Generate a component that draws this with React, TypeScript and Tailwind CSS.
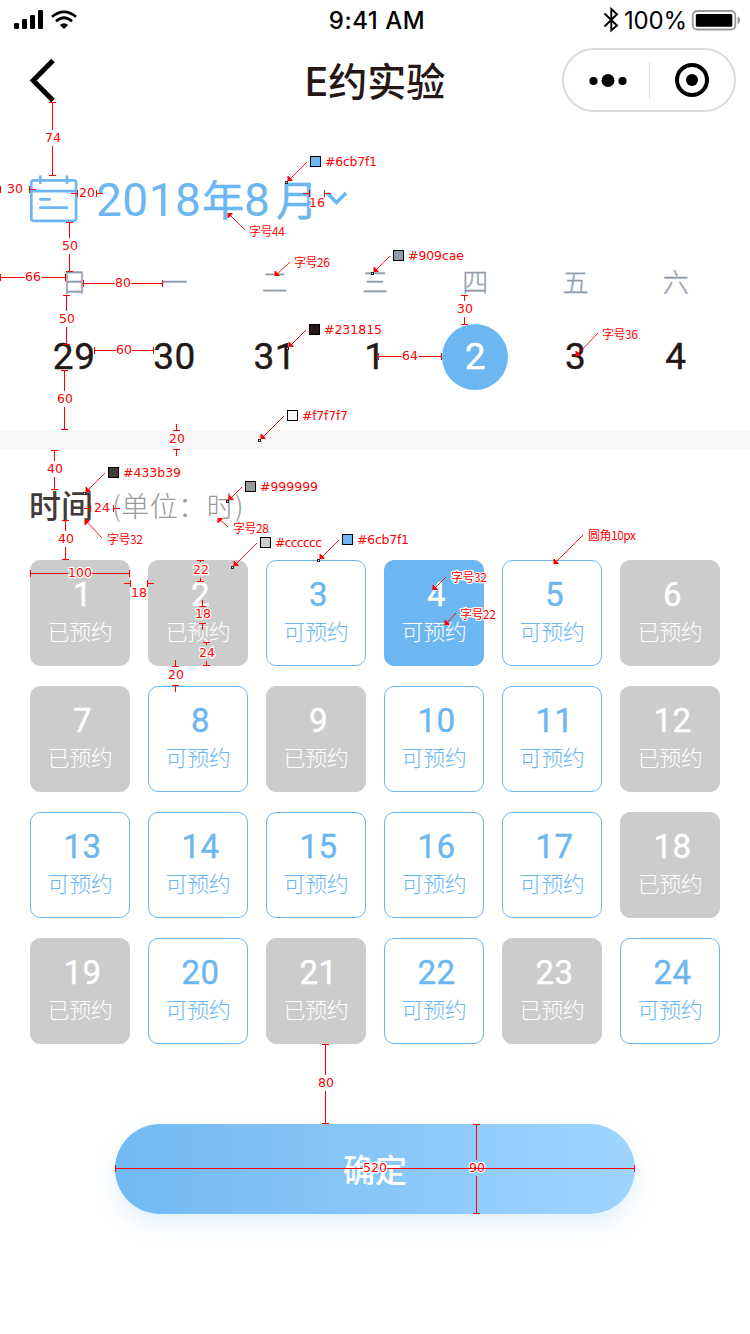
import React from "react";

const FONT = "font-['Inter','Noto_Sans_CJK_SC',sans-serif]";
const CJK = "font-['Noto_Sans_CJK_SC',sans-serif]";
const DIGITS = "font-['Roboto',sans-serif]";

const weekdays = ["日", "一", "二", "三", "四", "五", "六"];
const dates = [29, 30, 31, 1, 2, 3, 4];
const booked = new Set([1, 2, 6, 7, 9, 12, 18, 19, 21, 23]);
const selectedHour = 4;

function StatusBar() {
  return (
    <div className="flex h-10 items-center justify-between pr-[10px] pl-[14px]">
      <div className="flex w-[200px] items-center">
        <svg width="64" height="24" viewBox="0 0 64 24">
          <rect x="0" y="15" width="5" height="6" rx="1.2" />
          <rect x="8" y="11" width="5" height="10" rx="1.2" />
          <rect x="16" y="7" width="5" height="14" rx="1.2" />
          <rect x="24" y="2" width="5" height="19" rx="1.2" />
          <g fill="none" stroke="#000" strokeWidth="2.7">
            <path d="M38 8.8Q50 -1.2 62 8.8" />
            <path d="M42 13.3Q50 6.2 58 13.3" />
          </g>
          <path d="M45.8 17Q50 13.6 54.2 17L50 21Z" />
        </svg>
      </div>
      <div className="pt-[2px] text-[24px] leading-none font-medium tracking-[0.5px] text-black">9:41 AM</div>
      <div className="flex w-[200px] items-center justify-end">
        <svg width="18" height="28" viewBox="0 0 18 28" fill="none" stroke="#000" strokeWidth="1.9">
          <path d="M2.5 7.5L15 19.5L9.3 24.5V3L15 8.3L2.5 20.5" />
        </svg>
        <span className="ml-1 w-[67px] pt-[2px] text-[24px] leading-none tracking-[-0.2px] whitespace-nowrap text-black">100%</span>
        <svg className="-mr-[1px]" width="50" height="24" viewBox="0 0 50 24">
          <rect x="1.8" y="3" width="42.5" height="18.5" rx="4" fill="none" stroke="#9a9a9a" strokeWidth="1.8" />
          <rect x="4.8" y="6" width="36.5" height="12.8" rx="1.5" />
          <path d="M46.5 8.8C50 9.6 50 15 46.5 16Z" fill="#9a9a9a" />
        </svg>
      </div>
    </div>
  );
}

function NavBar() {
  return (
    <div className="flex h-[80px] items-center justify-between pr-[14px] pl-[28px]">
      <div className="w-[174px]">
        <svg width="28" height="44" viewBox="0 0 28 44" fill="none" stroke="#000" strokeWidth="5">
          <path d="M25 2.5L5.2 22.5L25 42.5" />
        </svg>
      </div>
      <h1 className={`${FONT} ml-[-14px] pt-[4px] text-[39px] leading-[76px] font-medium text-[#231815]`}>E约实验</h1>
      <div className="flex h-16 w-[174px] items-center rounded-full border-2 border-[#dcdcdc]">
        <div className="flex w-[85px] justify-center">
          <svg width="40" height="20" viewBox="0 0 40 20">
            <circle cx="6.5" cy="11" r="4.1" />
            <circle cx="21" cy="10.5" r="6.5" />
            <circle cx="35.5" cy="11" r="4.1" />
          </svg>
        </div>
        <div className="h-[37px] w-px bg-[#dcdcdc]" />
        <div className="flex flex-1 justify-center pr-px">
          <svg width="36" height="36" viewBox="0 0 36 36">
            <circle cx="18" cy="18" r="15" fill="none" stroke="#000" strokeWidth="4" />
            <circle cx="18" cy="18" r="6" />
          </svg>
        </div>
      </div>
    </div>
  );
}

function MonthHeader() {
  return (
    <div className="mt-[54px] flex h-[50px] items-center pl-[29px] text-[#6cb7f1]">
      <svg width="50" height="50" viewBox="0 0 50 50" fill="none" stroke="#6cb7f1" strokeWidth="2.7" strokeLinecap="round">
        <rect x="2.3" y="6.3" width="44.8" height="40.5" rx="2.5" />
        <path d="M2.3 17.2H47M11.3 2.5V9M38 2.5V9M11.3 25.3H20.8M11.3 33.7H38" />
      </svg>
      <div className="ml-[17px] flex items-baseline leading-[50px] whitespace-nowrap">
        <span className={`${DIGITS} w-[106px] text-[46px] tracking-[0.5px]`}>2018</span>
        <span className={`${CJK} w-[42px] text-[42px] leading-[50px] [-webkit-text-stroke:0.5px_#6cb7f1]`}>年</span>
        <span className={`${DIGITS} w-[32px] text-[46px]`}>8</span>
        <span className={`${CJK} w-[42px] text-[42px] leading-[50px] [-webkit-text-stroke:0.5px_#6cb7f1]`}>月</span>
      </div>
      <svg className="ml-[7px]" width="24" height="22" viewBox="0 0 24 22" fill="none" stroke="#6cb7f1" strokeWidth="3.4">
        <path d="M2 5L11.5 14.5L21 5" />
      </svg>
    </div>
  );
}

function Week() {
  return (
    <div className="grid grid-cols-7 px-6">
      {weekdays.map((d) => (
        <div key={d} className={`${CJK} mt-[36px] flex h-[40px] items-center justify-center text-[26px] font-light text-[#909cae] [-webkit-text-stroke:0.3px_#909cae]`}>
          {d}
        </div>
      ))}
      {dates.map((d) => (
        <div key={d} className="mt-[24px] flex justify-center">
          <div
            className={`${DIGITS} flex h-[66px] w-[66px] items-center justify-center rounded-full text-[37px] tracking-[0.5px] [-webkit-text-stroke:0.4px_currentColor] ${
              d === 2 ? "bg-[#6cb7f1] text-white" : "text-[#231815]"
            }`}
          >
            {d}
          </div>
        </div>
      ))}
    </div>
  );
}

function Slot({ hour }: { hour: number }) {
  const isBooked = booked.has(hour);
  const look = isBooked
    ? "border-[#cccccc] bg-[#cccccc] text-white"
    : hour === selectedHour
      ? "border-[#6cb7f1] bg-[#6cb7f1] text-white"
      : "border-[#6cb7f1] bg-white text-[#6cb7f1]";
  return (
    <div className={`flex h-[106px] flex-col items-center rounded-[10px] border ${look}`}>
      <span className={`${DIGITS} mt-[14px] pl-[5px] text-[33px] leading-[40px] tracking-[0.5px] [-webkit-text-stroke:0.4px_currentColor]`}>
        {hour}
      </span>
      <span className={`${CJK} mt-[-1px] text-[22px] leading-[32px] font-light tracking-[-0.3px] whitespace-nowrap`}>
        {isBooked ? "已预约" : "可预约"}
      </span>
    </div>
  );
}

type Measure = { axis: "h" | "v"; a: number; b: number; at: number; text: string; tx: number; ty: number; outside?: boolean };

const measures: Measure[] = [
  { axis: "v", a: 102, b: 175, at: 52, text: "74", tx: 53, ty: 138 },
  { axis: "v", a: 222, b: 271, at: 69, text: "50", tx: 70, ty: 246 },
  { axis: "v", a: 295, b: 344, at: 66, text: "50", tx: 67, ty: 319 },
  { axis: "v", a: 370, b: 429, at: 64, text: "60", tx: 65, ty: 399 },
  { axis: "v", a: 450, b: 489, at: 54, text: "40", tx: 55, ty: 469 },
  { axis: "v", a: 520, b: 559, at: 65, text: "40", tx: 66, ty: 539 },
  { axis: "v", a: 295, b: 324, at: 464, text: "30", tx: 465, ty: 309 },
  { axis: "v", a: 1044, b: 1123, at: 325, text: "80", tx: 326, ty: 1083 },
  { axis: "v", a: 1124, b: 1213, at: 476, text: "90", tx: 477, ty: 1168 },
  { axis: "v", a: 430, b: 449, at: 176, text: "20", tx: 177, ty: 439, outside: true },
  { axis: "v", a: 666, b: 685, at: 175, text: "20", tx: 176, ty: 675, outside: true },
  { axis: "v", a: 560, b: 581, at: 200, text: "22", tx: 201, ty: 570 },
  { axis: "v", a: 606, b: 623, at: 202, text: "18", tx: 203, ty: 614, outside: true },
  { axis: "v", a: 642, b: 665, at: 206, text: "24", tx: 207, ty: 653 },
  { axis: "h", a: 0, b: 65, at: 277, text: "66", tx: 33, ty: 277 },
  { axis: "h", a: 83, b: 162, at: 283, text: "80", tx: 123, ty: 283 },
  { axis: "h", a: 94, b: 153, at: 350, text: "60", tx: 124, ty: 350 },
  { axis: "h", a: 378, b: 441, at: 356, text: "64", tx: 410, ty: 356 },
  { axis: "h", a: 30, b: 129, at: 573, text: "100", tx: 80, ty: 573 },
  { axis: "h", a: 115, b: 634, at: 1168, text: "520", tx: 375, ty: 1168 },
  { axis: "h", a: 0, b: 29, at: 189, text: "30", tx: 15, ty: 189, outside: true },
  { axis: "h", a: 77, b: 96, at: 193, text: "20", tx: 87, ty: 193, outside: true },
  { axis: "h", a: 309, b: 324, at: 193, text: "16", tx: 317, ty: 203, outside: true },
  { axis: "h", a: 90, b: 113, at: 508, text: "24", tx: 102, ty: 508, outside: true },
  { axis: "h", a: 130, b: 147, at: 583, text: "18", tx: 139, ty: 593, outside: true },
];

type Note = { text: string; x: number; y: number; w: number; from: [number, number]; to: [number, number]; fill?: string };

const notes: Note[] = [
  { text: "#6cb7f1", x: 325, y: 166, w: 52, from: [307, 162], to: [286, 182], fill: "#6cb7f1" },
  { text: "#909cae", x: 408, y: 260, w: 56, from: [390, 256], to: [372, 273], fill: "#909cae" },
  { text: "#231815", x: 324, y: 334, w: 58, from: [306, 330], to: [287, 348], fill: "#231815" },
  { text: "#f7f7f7", x: 302, y: 420, w: 46, from: [284, 416], to: [259, 440], fill: "#f7f7f7" },
  { text: "#433b39", x: 123, y: 477, w: 58, from: [105, 473], to: [84, 493], fill: "#433b39" },
  { text: "#999999", x: 260, y: 491, w: 58, from: [242, 487], to: [227, 501], fill: "#999999" },
  { text: "#cccccc", x: 275, y: 547, w: 47, from: [257, 543], to: [232, 567], fill: "#cccccc" },
  { text: "#6cb7f1", x: 357, y: 544, w: 52, from: [339, 540], to: [318, 560], fill: "#6cb7f1" },
  { text: "字号44", x: 249, y: 236, w: 36, from: [245, 230], to: [226, 212] },
  { text: "字号26", x: 294, y: 267, w: 36, from: [290, 262], to: [273, 277] },
  { text: "字号36", x: 602, y: 339, w: 36, from: [598, 333], to: [574, 357] },
  { text: "字号32", x: 107, y: 544, w: 36, from: [102, 538], to: [83, 519] },
  { text: "字号28", x: 233, y: 533, w: 36, from: [228, 527], to: [216, 517] },
  { text: "圆角10px", x: 588, y: 540, w: 48, from: [583, 535], to: [552, 565] },
  { text: "字号32", x: 451, y: 582, w: 36, from: [446, 577], to: [431, 591] },
  { text: "字号22", x: 460, y: 619, w: 36, from: [456, 613], to: [443, 626] },
];

function MeasureMark({ m }: { m: Measure }) {
  const line = (p: number, q: number) =>
    m.axis === "h" ? `M${p} ${m.at + 0.5}H${q}` : `M${m.at + 0.5} ${p}V${q}`;
  const tick = (p: number) =>
    m.axis === "h" ? `M${p + 0.5} ${m.at - 3}v7` : `M${m.at - 3} ${p + 0.5}h7`;
  const center = m.axis === "h" ? m.tx : m.ty;
  const half = m.axis === "h" ? m.text.length * 4 : 8;
  const body = m.outside
    ? line(m.a - 6, m.a) + line(m.b, m.b + 7)
    : line(m.a, center - half) + line(center + half, m.b + 1);
  return (
    <g>
      <path d={body + tick(m.a) + tick(m.b)} stroke="#f00" fill="none" shapeRendering="crispEdges" />
      <text x={m.tx} y={m.ty + 4} textAnchor="middle" fontSize="12.5" textLength={m.text.length * 8} stroke="#fff" strokeWidth="2.4" paintOrder="stroke" fill="#f00">
        {m.text}
      </text>
    </g>
  );
}

function NoteMark({ n }: { n: Note }) {
  const [x, y] = n.to;
  const dx = Math.sign(n.from[0] - x);
  const dy = Math.sign(n.from[1] - y);
  return (
    <g>
      {n.fill && <rect x={x - 0.5} y={y - 0.5} width="2" height="2" fill="#fff" stroke="#222" />}
      <path d={`M${n.from[0]} ${n.from[1]}L${x + 2 * dx} ${y + dy}`} stroke="#f00" strokeWidth="0.9" />
      <path d={`M${x + 1.5 * dx} ${y + dy}v${5 * dy}h${dx}l${4 * dx} ${-4 * dy}v${-dy}Z`} fill="#f00" />
      {n.fill && <rect x={n.x - 14.5} y={n.y - 9.5} width="10" height="10" fill={n.fill} stroke="#000" />}
      <text
        x={n.x}
        y={n.fill ? n.y : n.y - 0.5}
        textLength={n.w}
        fontSize={n.fill ? 12.5 : 12}
        className={n.fill ? "" : CJK}
        stroke="#fff"
        strokeWidth="2.4"
        paintOrder="stroke"
        fill="#f00"
      >
        {n.text}
      </text>
    </g>
  );
}

export default function App() {
  return (
    <div className={`${FONT} relative h-[1334px] w-[750px] overflow-hidden bg-white`}>
      <StatusBar />
      <NavBar />
      <MonthHeader />
      <Week />
      <div className="mt-10 h-5 bg-[#f7f7f7]" />
      <div className={`${CJK} flex h-[110px] items-center pl-[29px] leading-none`}>
        <span className="mt-[-2px] text-[32px] font-medium text-[#433b39]">时间</span>
        <span className="ml-[19px] text-[28px] font-light tracking-[0.4px] whitespace-nowrap text-[#999999]">(单位：时)</span>
      </div>
      <div className="grid grid-cols-6 gap-x-[18px] gap-y-5 px-[30px]">
        {Array.from({ length: 24 }, (_, i) => (
          <Slot key={i} hour={i + 1} />
        ))}
      </div>
      <button
        className={`${CJK} mx-auto mt-20 flex h-[90px] w-[520px] items-center justify-center rounded-full bg-linear-to-r from-[#71b9f2] to-[#9fd4ff] pb-[3px] text-[32px] font-medium text-white shadow-[0_10px_20px_rgba(108,183,241,0.2)]`}
      >
        确定
      </button>
      <svg className="pointer-events-none absolute inset-0 font-['DejaVu_Sans',sans-serif]" width="750" height="1334" viewBox="0 0 750 1334">
        {measures.map((m, i) => (
          <MeasureMark key={i} m={m} />
        ))}
        {notes.map((n, i) => (
          <NoteMark key={i} n={n} />
        ))}
      </svg>
    </div>
  );
}
